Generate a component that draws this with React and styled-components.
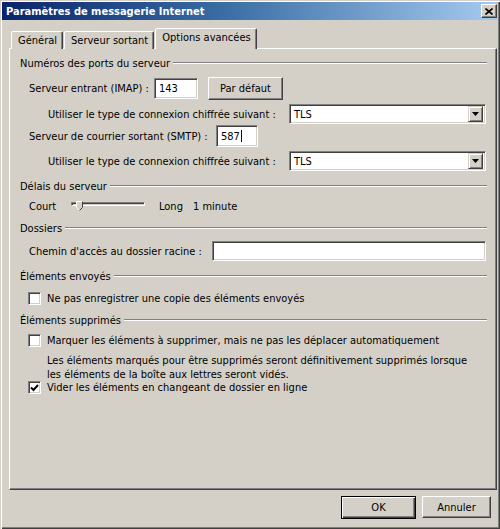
import React from 'react';
import styled, { createGlobalStyle } from 'styled-components';

const face = '#d4d0c8';

const GlobalStyle = createGlobalStyle`
  html, body {
    margin: 0;
    padding: 0;
    background: ${face};
    overflow: hidden;
  }
  body {
    font-family: "DejaVu Sans Condensed", "DejaVu Sans", sans-serif;
    font-size: 11px;
    color: #000;
  }
`;

const Window = styled.div`
  width: 500px;
  height: 529px;
  box-sizing: border-box;
  padding: 2px;
  display: flex;
  flex-direction: column;
  background: ${face};
  box-shadow: inset 1px 1px 0 ${face}, inset 2px 2px 0 #fff,
    inset -1px -1px 0 #404040, inset -2px -2px 0 #808080;
`;

const TitleBar = styled.div`
  height: 18px;
  display: flex;
  align-items: center;
  justify-content: space-between;
  padding: 0 1px 0 4px;
  background: linear-gradient(90deg, #0a246a 0%, #3a6ea5 45%, #a6caf0 100%);
  color: #fff;
  font-weight: bold;
  font-size: 11px;
`;

const CloseButton = styled.div`
  width: 14px;
  height: 12px;
  display: flex;
  align-items: center;
  justify-content: center;
  background: ${face};
  border: 1px solid;
  border-color: #fff #404040 #404040 #fff;
  box-shadow: inset -1px -1px 0 #808080;
`;

const Body = styled.div`
  flex: 1;
  display: flex;
  flex-direction: column;
  padding: 8px 1px 0 7px;
`;

const TabStrip = styled.div`
  height: 21px;
  display: flex;
  align-items: flex-end;
  gap: 1px;
  padding-left: 2px;
  margin-bottom: -1px;
`;

const Tab = styled.div`
  position: relative;
  z-index: ${(p) => (p.$active ? 1 : 0)};
  box-sizing: border-box;
  height: ${(p) => (p.$active ? 21 : 18)}px;
  padding: 0 5px 0 6px;
  padding-bottom: ${(p) => (p.$active ? 3 : 1)}px;
  display: flex;
  align-items: center;
  background: ${face};
  border: 1px solid;
  border-bottom: none;
  border-color: #fff #404040 transparent #fff;
  border-radius: 2px 2px 0 0;
  box-shadow: inset -1px 0 0 #808080;
  white-space: nowrap;
`;

const Panel = styled.div`
  height: 442px;
  box-sizing: border-box;
  border: 1px solid;
  border-color: #fff #404040 #404040 #fff;
  box-shadow: inset -1px -1px 0 #808080;
  display: flex;
  flex-direction: column;
`;

const GroupHeader = styled.div`
  height: 14px;
  margin-top: ${(p) => p.$mt}px;
  display: flex;
  align-items: center;
  padding: 0 9px 0 10px;
  white-space: nowrap;

  &::after {
    content: '';
    flex: 1;
    margin-left: 3px;
    border-top: 1px solid #808080;
    border-bottom: 1px solid #fff;
  }
`;

const Row = styled.div`
  height: ${(p) => p.$h}px;
  margin-top: ${(p) => p.$mt}px;
  padding-left: ${(p) => p.$indent}px;
  padding-right: 10px;
  display: flex;
  align-items: center;
  white-space: nowrap;
`;

const Label = styled.span`
  flex: none;
  width: ${(p) => (p.$w ? `${p.$w}px` : 'auto')};
  margin-right: ${(p) => p.$gap || 0}px;
`;

const sunken = `
  box-sizing: border-box;
  border: 1px solid;
  border-color: #808080 #fff #fff #808080;
  box-shadow: inset 1px 1px 0 #404040, inset -1px -1px 0 ${face};
  background: #fff;
`;

const TextBox = styled.div`
  ${sunken}
  width: ${(p) => (p.$w ? `${p.$w}px` : 'auto')};
  flex: ${(p) => (p.$w ? 'none' : '1')};
  height: ${(p) => p.$h}px;
  padding-left: 4px;
  display: flex;
  align-items: center;
`;

const Caret = styled.span`
  width: 1px;
  height: 12px;
  background: #000;
  margin-left: 1px;
`;

const Button = styled.div`
  box-sizing: border-box;
  width: ${(p) => p.$w}px;
  height: ${(p) => p.$h || 23}px;
  margin-left: ${(p) => p.$ml || 0}px;
  display: flex;
  align-items: center;
  justify-content: center;
  background: ${face};
  border: 1px solid;
  border-color: ${(p) =>
    p.$default ? '#000' : '#fff #404040 #404040 #fff'};
  box-shadow: ${(p) =>
    p.$default
      ? 'inset 1px 1px 0 #fff, inset -1px -1px 0 #404040, inset -2px -2px 0 #808080'
      : 'inset -1px -1px 0 #808080'};
`;

const Select = styled.div`
  ${sunken}
  width: 197px;
  height: 20px;
  display: flex;
  align-items: center;
  justify-content: space-between;
  padding: 0 2px 0 4px;
`;

const DropButton = styled.div`
  box-sizing: border-box;
  width: 15px;
  height: 16px;
  display: flex;
  align-items: center;
  justify-content: center;
  background: ${face};
  border: 1px solid;
  border-color: ${face} #404040 #404040 ${face};
  box-shadow: inset 1px 1px 0 #fff, inset -1px -1px 0 #808080;
`;

const Slider = styled.div`
  position: relative;
  width: 88px;
  height: 16px;
  flex: none;
`;

const Track = styled.div`
  box-sizing: border-box;
  width: 74px;
  height: 4px;
  margin-top: 4px;
  border: 1px solid;
  border-color: #808080 #fff #fff #808080;
  box-shadow: inset 1px 1px 0 #404040;
  background: ${face};
`;

const Thumb = styled.svg`
  position: absolute;
  left: 5px;
  top: 3px;
`;

const CheckBox = styled.div`
  ${sunken}
  width: 13px;
  height: 13px;
  flex: none;
  margin-right: 6px;
  display: flex;
  align-items: center;
  justify-content: center;
`;

const Note = styled.p`
  margin: 7px 0 0;
  padding-left: 37px;
  line-height: 14px;
  height: 28px;
`;

const Footer = styled.div`
  margin-top: 6px;
  display: flex;
  justify-content: flex-end;
  align-items: flex-start;
  gap: 6px;
  padding-right: 6px;
`;

function Combo({ value }) {
  return (
    <Select>
      <span>{value}</span>
      <DropButton>
        <svg width="7" height="4" viewBox="0 0 7 4">
          <path d="M0 0h7L3.5 4z" fill="#000" />
        </svg>
      </DropButton>
    </Select>
  );
}

function Check({ checked, children }) {
  return (
    <>
      <CheckBox>
        {checked && (
          <svg width="9" height="9" viewBox="0 0 9 9">
            <path d="M1 4.5 L3.5 7 L8 2" stroke="#000" strokeWidth="2" fill="none" />
          </svg>
        )}
      </CheckBox>
      <span>{children}</span>
    </>
  );
}

export default function App() {
  return (
    <>
      <GlobalStyle />
      <Window>
        <TitleBar>
          <span>Paramètres de messagerie Internet</span>
          <CloseButton>
            <svg width="8" height="7" viewBox="0 0 8 7">
              <path d="M0.5 0.5 L7.5 6.5 M7.5 0.5 L0.5 6.5" stroke="#000" strokeWidth="1.6" />
            </svg>
          </CloseButton>
        </TitleBar>

        <Body>
          <TabStrip>
            <Tab>Général</Tab>
            <Tab>Serveur sortant</Tab>
            <Tab $active>Options avancées</Tab>
          </TabStrip>

          <Panel>
            <GroupHeader $mt={7}>Numéros des ports du serveur</GroupHeader>
            <Row $h={23} $mt={7} $indent={19}>
              <Label $w={125}>Serveur entrant (IMAP) :</Label>
              <TextBox $w={44} $h={21}>143</TextBox>
              <Button $w={75} $ml={10}>Par défaut</Button>
            </Row>
            <Row $h={20} $mt={4} $indent={38}>
              <Label $w={241}>Utiliser le type de connexion chiffrée suivant :</Label>
              <Combo value="TLS" />
            </Row>
            <Row $h={22} $mt={1} $indent={19}>
              <Label $w={187}>Serveur de courrier sortant (SMTP) :</Label>
              <TextBox $w={42} $h={22}>
                587
                <Caret />
              </TextBox>
            </Row>
            <Row $h={20} $mt={4} $indent={38}>
              <Label $w={241}>Utiliser le type de connexion chiffrée suivant :</Label>
              <Combo value="TLS" />
            </Row>

            <GroupHeader $mt={8}>Délais du serveur</GroupHeader>
            <Row $h={16} $mt={5} $indent={19}>
              <Label $w={42}>Court</Label>
              <Slider>
                <Track />
                <Thumb width="7" height="10" viewBox="0 0 7 10">
                  <path d="M0.5 0.5h6v6l-3 3l-3 -3z" fill={face} stroke="#fff" />
                  <path d="M6.5 0.5v6l-3 3" fill="none" stroke="#404040" />
                </Thumb>
              </Slider>
              <Label $w={34}>Long</Label>
              <Label>1 minute</Label>
            </Row>

            <GroupHeader $mt={7}>Dossiers</GroupHeader>
            <Row $h={20} $mt={6} $indent={19}>
              <Label $w={183}>Chemin d'accès au dossier racine :</Label>
              <TextBox $h={20} />
            </Row>

            <GroupHeader $mt={8}>Éléments envoyés</GroupHeader>
            <Row $h={13} $mt={9} $indent={18}>
              <Check>Ne pas enregistrer une copie des éléments envoyés</Check>
            </Row>

            <GroupHeader $mt={8}>Éléments supprimés</GroupHeader>
            <Row $h={13} $mt={7} $indent={18}>
              <Check>
                Marquer les éléments à supprimer, mais ne pas les déplacer automatiquement
              </Check>
            </Row>
            <Note>
              Les éléments marqués pour être supprimés seront définitivement supprimés lorsque
              <br />
              les éléments de la boîte aux lettres seront vidés.
            </Note>
            <Row $h={13} $mt={-1} $indent={18}>
              <Check checked>Vider les éléments en changeant de dossier en ligne</Check>
            </Row>
          </Panel>

          <Footer>
            <Button $w={75} $default>OK</Button>
            <Button $w={69} $h={22}>Annuler</Button>
          </Footer>
        </Body>
      </Window>
    </>
  );
}
